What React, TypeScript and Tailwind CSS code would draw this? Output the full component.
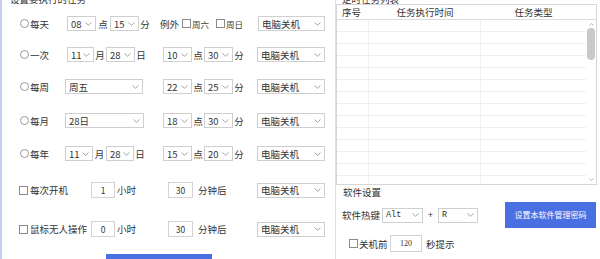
import React from "react";

const txt = "text-[9.5px] leading-[12px] text-[#333]";

function Chevron() {
  return (
    <svg width="7" height="4" viewBox="0 0 7 4" className="shrink-0">
      <path d="M0.5 0.5 L3.5 3.3 L6.5 0.5" fill="none" stroke="#9a9a9a" strokeWidth="0.9" />
    </svg>
  );
}

function Select({ value, w, mono }: { value: string; w: string; mono?: boolean }) {
  return (
    <div className={`flex items-center justify-between h-[15px] border border-[#cfcfcf] bg-white pl-[3px] pr-[3px] shrink-0 ${w}`}>
      <span className={mono ? "font-['Liberation_Mono',monospace] text-[8.5px] leading-[12px] text-[#333]" : txt}>{value}</span>
      <Chevron />
    </div>
  );
}

function Input({ value, w }: { value: string; w: string }) {
  return (
    <div className={`flex items-center justify-center h-[16px] border border-[#d3d3d3] bg-white shrink-0 text-[8.5px] text-[#333] ${w}`}>
      {value}
    </div>
  );
}

function Radio() {
  return <span className="w-[9px] h-[9px] rounded-full border border-[#9a9a9a] bg-white shrink-0" />;
}

function Check() {
  return <span className="w-[9px] h-[9px] border border-[#8a8a8a] bg-white shrink-0" />;
}

function Label({ children, w }: { children: React.ReactNode; w: string }) {
  return <span className={`${txt} shrink-0 ${w}`}>{children}</span>;
}

// 点 / 分 group shared by rows 2-5, starts at x=163
function TimeGroup({ h, m }: { h: string; m: string }) {
  return (
    <>
      <Select value={h} w="w-[29px]" />
      <Label w="w-[12px] text-center">点</Label>
      <Select value={m} w="w-[29px]" />
      <Label w="w-[12px] text-center">分</Label>
      <div className="ml-[12px]">
        <Select value="电脑关机" w="w-[68px]" />
      </div>
    </>
  );
}

function RadioLabel({ label, w }: { label: string; w: string }) {
  return (
    <div className={`flex items-center gap-[1px] shrink-0 ${w}`}>
      <Radio />
      <span className={txt}>{label}</span>
    </div>
  );
}

export default function App() {
  const rows = Array.from({ length: 14 });
  return (
    <div className="w-[600px] h-[259px] overflow-hidden flex bg-white font-['Noto_Sans_CJK_SC','Noto_Sans',sans-serif]">
      {/* left: task settings */}
      <div className="w-[335px] shrink-0 border-l-2 border-[#c5cdf0] flex flex-col">
        <div className={`h-[12px] -mt-[7px] pl-[8px] ${txt}`}>设置要执行的任务</div>

        {/* 每天 */}
        <div className="flex items-center h-[15px] mt-[11px] pl-[18px]">
          <RadioLabel label="每天" w="w-[47px]" />
          <Select value="08" w="w-[29px]" />
          <Label w="w-[14px] text-center">点</Label>
          <Select value="15" w="w-[29px]" />
          <Label w="w-[12px] text-center">分</Label>
          <Label w="w-[30px] pl-[9px]">例外</Label>
          <div className="flex items-center gap-[1px] ml-[1px] w-[34px]">
            <Check />
            <span className="text-[8.5px] leading-[12px] text-[#444]">周六</span>
          </div>
          <div className="flex items-center gap-[1px] w-[42px]">
            <Check />
            <span className="text-[8.5px] leading-[12px] text-[#444]">周日</span>
          </div>
          <Select value="电脑关机" w="w-[67px]" />
        </div>

        {/* 一次 */}
        <div className="flex items-center h-[15px] mt-[16px] pl-[18px]">
          <div className="flex items-center w-[143px] shrink-0">
            <RadioLabel label="一次" w="w-[47px]" />
            <Select value="11" w="w-[27px]" />
            <Label w="w-[12px] text-center">月</Label>
            <Select value="28" w="w-[29px]" />
            <Label w="w-[12px] text-center">日</Label>
          </div>
          <TimeGroup h="10" m="30" />
        </div>

        {/* 每周 */}
        <div className="flex items-center h-[15px] mt-[17px] pl-[18px]">
          <div className="flex items-center w-[143px] shrink-0">
            <RadioLabel label="每周" w="w-[45px]" />
            <Select value="周五" w="w-[78px]" />
          </div>
          <TimeGroup h="22" m="25" />
        </div>

        {/* 每月 */}
        <div className="flex items-center h-[15px] mt-[19px] pl-[18px]">
          <div className="flex items-center w-[143px] shrink-0">
            <RadioLabel label="每月" w="w-[45px]" />
            <Select value="28日" w="w-[79px]" />
          </div>
          <TimeGroup h="18" m="30" />
        </div>

        {/* 每年 */}
        <div className="flex items-center h-[15px] mt-[18px] pl-[18px]">
          <div className="flex items-center w-[143px] shrink-0">
            <RadioLabel label="每年" w="w-[45px]" />
            <Select value="11" w="w-[28px]" />
            <Label w="w-[13px] text-center">月</Label>
            <Select value="28" w="w-[28px]" />
            <Label w="w-[12px] text-center">日</Label>
          </div>
          <TimeGroup h="15" m="20" />
        </div>

        {/* 每次开机 */}
        <div className="flex items-center h-[16px] mt-[21px] pl-[17px]">
          <div className="flex items-center gap-[2px] w-[72px] shrink-0">
            <Check />
            <span className={txt}>每次开机</span>
          </div>
          <Input value="1" w="w-[24px]" />
          <Label w="w-[53px] pl-[2px]">小时</Label>
          <Input value="30" w="w-[25px]" />
          <Label w="w-[64px] pl-[5px]">分钟后</Label>
          <Select value="电脑关机" w="w-[68px]" />
        </div>

        {/* 鼠标无人操作 */}
        <div className="flex items-center h-[16px] mt-[23px] pl-[17px]">
          <div className="flex items-center gap-[2px] w-[72px] shrink-0">
            <Check />
            <span className={txt}>鼠标无人操作</span>
          </div>
          <Input value="0" w="w-[24px]" />
          <Label w="w-[53px] pl-[2px]">小时</Label>
          <Input value="30" w="w-[25px]" />
          <Label w="w-[64px] pl-[5px]">分钟后</Label>
          <Select value="电脑关机" w="w-[68px]" />
        </div>

        <div className="ml-[104px] mt-[17px] w-[106px] h-[24px] bg-[#4a6fe3] shrink-0" />
      </div>

      {/* right: task list + settings */}
      <div className="flex-1 border-l border-[#dedede] flex flex-col">
        <div className={`h-[11px] -mt-[7px] pl-[6px] ${txt}`}>定时任务列表</div>
        <div className="h-[181px] w-[261px] border border-[#d6d6d6] flex flex-col shrink-0">
          <div className="flex h-[15px] border-b border-[#dcdcdc] items-center shrink-0">
            <span className={`w-[32px] pl-[5px] ${txt}`}>序号</span>
            <span className={`w-[112px] text-center ${txt}`}>任务执行时间</span>
            <span className={`w-[105px] text-center ${txt}`}>任务类型</span>
          </div>
          <div className="flex flex-1 overflow-hidden">
            <div className="w-[249px] flex flex-col overflow-hidden">
              {rows.map((_, i) => (
                <div key={i} className="flex h-[12px] shrink-0 border-b border-[#efefef]">
                  <div className="w-[32px] border-r border-[#f0f0f0]" />
                  <div className="w-[112px] border-r border-[#f0f0f0]" />
                  <div className="flex-1" />
                </div>
              ))}
            </div>
            <div className="flex-1 flex flex-col items-center pt-[3px] pb-[3px]">
              <svg width="5" height="3" viewBox="0 0 5 3">
                <path d="M0.5 2.5 L2.5 0.5 L4.5 2.5" fill="none" stroke="#a0a0a0" strokeWidth="0.8" />
              </svg>
              <div className="w-[8px] h-[32px] mt-[2px] rounded-full bg-[#c9c9c9]" />
              <div className="flex-1" />
              <svg width="5" height="3" viewBox="0 0 5 3">
                <path d="M0.5 0.5 L2.5 2.5 L4.5 0.5" fill="none" stroke="#a0a0a0" strokeWidth="0.8" />
              </svg>
            </div>
          </div>
        </div>

        <div className={`h-[12px] mt-[1px] pl-[7px] ${txt}`}>软件设置</div>

        <div className="flex items-center h-[26px] mt-[4px] pl-[6px]">
          <Label w="w-[40px]">软件热键</Label>
          <Select value="Alt" w="w-[41px]" mono />
          <span className="w-[15px] text-center text-[9px] text-[#333]">+</span>
          <Select value="R" w="w-[40px]" mono />
          <div className="ml-[27px] w-[91px] h-[26px] bg-[#4a6fe3] flex items-center justify-center text-[8px] text-white">
            设置本软件管理密码
          </div>
        </div>

        <div className="flex items-center h-[17px] mt-[7px] pl-[13px]">
          <div className="flex items-center gap-[1px] w-[41px] shrink-0">
            <Check />
            <span className={txt}>关机前</span>
          </div>
          <div className="flex items-center justify-center w-[32px] h-[17px] border border-[#d3d3d3] text-[8px] text-[#333] font-['Liberation_Serif',serif]">
            120
          </div>
          <Label w="pl-[4px]">秒提示</Label>
        </div>
      </div>
    </div>
  );
}
